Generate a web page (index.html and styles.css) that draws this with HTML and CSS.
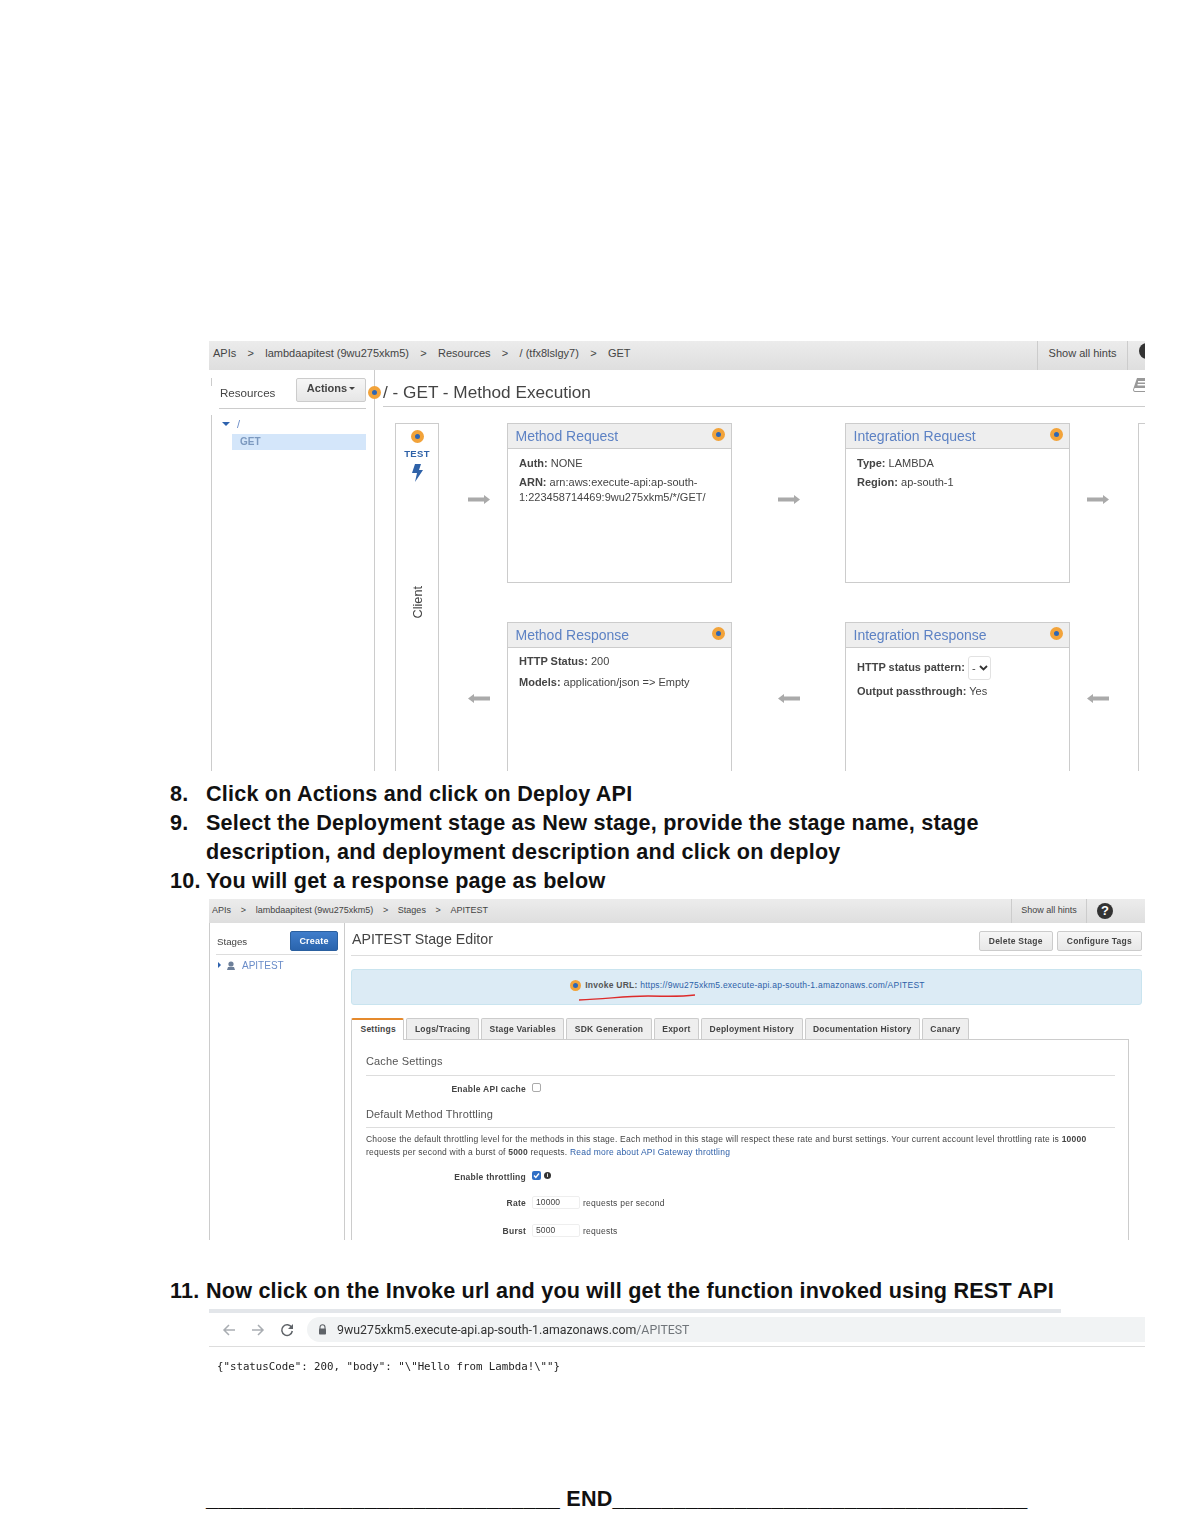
FILE: index.html
```html
<!DOCTYPE html>
<html lang="en">
<head>
<meta charset="UTF-8">
<meta name="viewport" content="width=device-width, initial-scale=1">
<title>Deploy API steps</title>
<link rel="stylesheet" href="styles.css">
</head>
<body>
<div class="page">

  <!-- Screenshot: method execution -->
  <section class="shot shot-method">
    <div class="bar">
      <div class="crumbs">
        <span>APIs</span><i>&gt;</i><span>lambdaapitest (9wu275xkm5)</span><i>&gt;</i><span>Resources</span><i>&gt;</i><span>/ (tfx8lslgy7)</span><i>&gt;</i><span>GET</span>
      </div>
      <div class="hints-link">Show all hints</div>
      <div class="help"><span class="help-icon"></span></div>
    </div>
    <div class="method-body">
      <aside class="res-side">
        <div class="res-head">
          <span>Resources</span>
          <button class="btn-actions">Actions<b class="btn-caret"></b></button>
        </div>
        <div class="res-tree">
          <div class="tree-root"><b class="caret-down"></b><span>/</span></div>
          <div class="tree-get">GET</div>
        </div>
      </aside>
      <main class="method-main">
        <span class="hint hint-edge"></span>
        <div class="method-title">
          <h2>/ - GET - Method Execution</h2>
          <svg class="book" width="14" height="16" viewBox="0 0 14 16"><path d="M4 1h10v10H2.500C1.600 11 1 11.500 1 12.500S1.600 14 2.500 14H14v1H2C.8 15 0 14 0 12.800z" fill="#999"/><path d="M5 4h9v1.500H5zM4.500 7H14v1.500H4.500z" fill="#fff"/></svg>
        </div>
        <div class="flow">
          <div class="client">
            <span class="hint"></span>
            <span class="test">TEST</span>
            <svg class="bolt" width="11" height="18" viewBox="0 0 11 18"><path d="M3 0h6L7 6h4L3 18l2-9H0z" fill="#2f62a8"/></svg>
            <span class="client-label">Client</span>
          </div>

          <svg class="arrow arrow-a r1" width="22" height="9" viewBox="0 0 22 9"><path d="M0 2.500h16V0l6 4.500L16 9V6.500H0z" fill="#aaa"/></svg>
          <div class="card c1 r1">
            <div class="card-head"><h3>Method Request</h3><span class="hint"></span></div>
            <div class="card-text">
              <p><b>Auth:</b> NONE</p>
              <p><b>ARN:</b> arn:aws:execute-api:ap-south-<br>1:223458714469:9wu275xkm5/*/GET/</p>
            </div>
          </div>
          <svg class="arrow arrow-b r1" width="22" height="9" viewBox="0 0 22 9"><path d="M0 2.500h16V0l6 4.500L16 9V6.500H0z" fill="#aaa"/></svg>
          <div class="card c2 r1">
            <div class="card-head"><h3>Integration Request</h3><span class="hint"></span></div>
            <div class="card-text">
              <p><b>Type:</b> LAMBDA</p>
              <p><b>Region:</b> ap-south-1</p>
            </div>
          </div>
          <svg class="arrow arrow-c r1" width="22" height="9" viewBox="0 0 22 9"><path d="M0 2.500h16V0l6 4.500L16 9V6.500H0z" fill="#aaa"/></svg>

          <svg class="arrow arrow-a r2" width="22" height="9" viewBox="0 0 22 9"><path d="M22 2.500H6V0L0 4.500 6 9V6.500h16z" fill="#aaa"/></svg>
          <div class="card card-open c1 r2">
            <div class="card-head"><h3>Method Response</h3><span class="hint"></span></div>
            <div class="card-text">
              <p><b>HTTP Status:</b> 200</p>
              <p><b>Models:</b> application/json =&gt; Empty</p>
            </div>
          </div>
          <svg class="arrow arrow-b r2" width="22" height="9" viewBox="0 0 22 9"><path d="M22 2.500H6V0L0 4.500 6 9V6.500h16z" fill="#aaa"/></svg>
          <div class="card card-open c2 r2">
            <div class="card-head"><h3>Integration Response</h3><span class="hint"></span></div>
            <div class="card-text card-select">
              <p><b>HTTP status pattern:</b> <span class="mini-select">- <svg width="9" height="6" viewBox="0 0 9 6"><path d="M1 1l3.500 3.500L8 1" fill="none" stroke="#333" stroke-width="1.800"/></svg></span></p>
              <p><b>Output passthrough:</b> Yes</p>
            </div>
          </div>
          <svg class="arrow arrow-c r2" width="22" height="9" viewBox="0 0 22 9"><path d="M22 2.500H6V0L0 4.500 6 9V6.500h16z" fill="#aaa"/></svg>

          <div class="backend"></div>
        </div>
      </main>
    </div>
  </section>

  <ol class="steps">
    <li><span class="num">8.</span><span>Click on Actions and click on Deploy API</span></li>
    <li><span class="num">9.</span><span>Select the Deployment stage as New stage, provide the stage name, stage description, and deployment description and click on deploy</span></li>
    <li><span class="num">10.</span><span>You will get a response page as below</span></li>
  </ol>

  <!-- Screenshot: stage editor -->
  <section class="shot shot-stage">
    <div class="bar bar-small">
      <div class="crumbs">
        <span>APIs</span><i>&gt;</i><span>lambdaapitest (9wu275xkm5)</span><i>&gt;</i><span>Stages</span><i>&gt;</i><span>APITEST</span>
      </div>
      <div class="hints-link">Show all hints</div>
      <div class="help"><span class="help-icon">?</span></div>
    </div>
    <div class="stage-body">
      <aside class="stage-side">
        <div class="stage-side-head">
          <span>Stages</span>
          <button class="btn-create">Create</button>
        </div>
        <div class="stage-item">
          <b class="caret-right"></b>
          <svg width="10" height="9" viewBox="0 0 10 9"><circle cx="5" cy="3" r="2.600" fill="#6d7f99"/><path d="M1 9l1-3h6l1 3z" fill="#6d7f99"/></svg>
          <span>APITEST</span>
        </div>
      </aside>
      <main class="stage-main">
        <div class="stage-title">
          <h2>APITEST Stage Editor</h2>
          <div class="stage-buttons">
            <button class="btn-plain">Delete Stage</button>
            <button class="btn-plain">Configure Tags</button>
          </div>
        </div>
        <div class="invoke">
          <span class="hint"></span>
          <span class="invoke-text"><b>Invoke URL:</b> <a>https://9wu275xkm5.execute-api.ap-south-1.amazonaws.com/APITEST</a></span>
          <svg class="scribble" width="119" height="7" viewBox="0 0 119 7"><path d="M1 6C30 5 45 2 70 2c18 0 30 1 47-1" fill="none" stroke="#dd2b2b" stroke-width="1.500"/></svg>
        </div>
        <nav class="tabs">
          <span class="tab tab-on">Settings</span>
          <span class="tab">Logs/Tracing</span>
          <span class="tab">Stage Variables</span>
          <span class="tab">SDK Generation</span>
          <span class="tab">Export</span>
          <span class="tab">Deployment History</span>
          <span class="tab">Documentation History</span>
          <span class="tab">Canary</span>
        </nav>
        <div class="panel">
          <h4>Cache Settings</h4>
          <div class="form-row row-cache">
            <label>Enable API cache</label>
            <span class="check"></span>
          </div>
          <h4 class="h-throttle">Default Method Throttling</h4>
          <p class="panel-note">Choose the default throttling level for the methods in this stage. Each method in this stage will respect these rate and burst settings. Your current account level throttling rate is <b>10000</b> requests per second with a burst of <b>5000</b> requests. <a>Read more about API Gateway throttling</a></p>
          <div class="form-row row-throttle">
            <label>Enable throttling</label>
            <span class="check check-on"><svg width="9" height="9" viewBox="0 0 9 9"><path d="M2 4.500l1.800 2L7 2.500" fill="none" stroke="#fff" stroke-width="1.400"/></svg></span>
            <span class="info">i</span>
          </div>
          <div class="form-row row-rate">
            <label>Rate</label>
            <span class="num-input">10000</span>
            <span class="unit">requests per second</span>
          </div>
          <div class="form-row row-burst">
            <label>Burst</label>
            <span class="num-input">5000</span>
            <span class="unit">requests</span>
          </div>
        </div>
      </main>
    </div>
  </section>

  <ol class="steps steps-last">
    <li><span class="num">11.</span><span>Now click on the Invoke url and you will get the function invoked using REST API</span></li>
  </ol>

  <!-- Screenshot: browser result -->
  <section class="shot-browser">
    <div class="browser-rule"></div>
    <div class="browser-bar">
      <svg width="14" height="14" viewBox="0 0 14 14"><path d="M13 7H2M7 2L2 7l5 5" fill="none" stroke="#a9adb2" stroke-width="1.500"/></svg>
      <svg width="14" height="14" viewBox="0 0 14 14"><path d="M1 7h11M7 2l5 5-5 5" fill="none" stroke="#a9adb2" stroke-width="1.500"/></svg>
      <svg width="14" height="14" viewBox="0 0 14 14"><path d="M11.700 4.500A5.300 5.300 0 1 0 12.300 8" fill="none" stroke="#5f6368" stroke-width="1.500"/><path d="M13 1v5H8z" fill="#5f6368"/></svg>
      <div class="url">
        <svg width="9" height="11" viewBox="0 0 9 11"><path d="M2 5V3.200a2.500 2.500 0 0 1 5 0V5" fill="none" stroke="#5f6368" stroke-width="1.100"/><rect x="1" y="4.500" width="7" height="6" rx=".8" fill="#5f6368"/></svg>
        <span>9wu275xkm5.execute-api.ap-south-1.amazonaws.com<em>/APITEST</em></span>
      </div>
    </div>
    <pre class="json">{"statusCode": 200, "body": "\"Hello from Lambda!\""}</pre>
  </section>

  <p class="end-line">_____________________________ END__________________________________</p>
</div>
</body>
</html>
```

FILE: styles.css
```css
* {
  box-sizing: border-box;
}
body {
  margin: 0;
  background: #fff;
  font-family: 'Liberation Sans', Arial, sans-serif;
  color: #444;
}
.page {
  width: 1202px;
  height: 1522px;
  padding-top: 341px;
  overflow: hidden;
}
h2, h3, h4, p, ol, pre {
  margin: 0;
  padding: 0;
  font-weight: normal;
}
button {
  font-family: inherit;
  padding: 0;
}

/* screenshots */
.shot {
  margin-left: 209px;
  width: 936px;
  overflow: hidden;
  filter: blur(0.3px);
}
.shot-method {
  height: 430px;
}
.shot-stage {
  height: 341px;
  margin-top: 4px;
}

/* top grey bar */
.bar {
  display: flex;
  align-items: stretch;
  height: 29px;
  background: linear-gradient(#ececec, #dedede);
  font-size: 11px;
  line-height: 24px;
}
.crumbs {
  flex: 1;
  padding-left: 4px;
  white-space: nowrap;
}
.crumbs i {
  font-style: normal;
  margin: 0 11.300px;
}
.hints-link {
  width: 91px;
  border-left: 1px solid #ccc;
  border-right: 1px solid #ccc;
  text-align: center;
}
.help {
  flex: none;
  width: 17px;
  padding: 2px 0 0 11px;
  overflow: hidden;
}
.help-icon {
  display: block;
  width: 16px;
  height: 16px;
  border-radius: 50%;
  background: #333;
  color: #fff;
  font-size: 13px;
  font-weight: bold;
  line-height: 16px;
  text-align: center;
}
.bar-small {
  height: 24px;
  font-size: 9px;
  line-height: 23px;
}
.bar-small .crumbs {
  padding-left: 3px;
}
.bar-small .crumbs i {
  margin: 0 9.700px;
}
.bar-small .hints-link {
  width: 76px;
}
.bar-small .help {
  width: 58px;
  padding: 4px 0 0 10px;
}

/* method execution */
.method-body {
  display: grid;
  grid-template-columns: 166px 1fr;
  height: 401px;
}
.res-side {
  position: relative;
  border-right: 1px solid #ccc;
  padding-left: 2px;
}
.res-side::before {
  content: '';
  position: absolute;
  left: 2px;
  top: 8px;
  height: 8px;
  border-left: 1px solid #ccc;
}
.res-head {
  display: flex;
  justify-content: space-between;
  align-items: center;
  margin: 8px 8px 0 8px;
  padding: 0 0 6px 1px;
  border-bottom: 1px solid #ccc;
  font-size: 11.600px;
}
.res-head span {
  padding-top: 4px;
}
.btn-actions {
  width: 70px;
  height: 24px;
  border: 1px solid #ccc;
  border-radius: 2px;
  background: linear-gradient(#f6f6f6, #e6e6e6);
  font-size: 11px;
  font-weight: bold;
  color: #444;
  line-height: 19px;
  padding-bottom: 3px;
}
.btn-caret {
  display: inline-block;
  margin-left: 2px;
  vertical-align: 2px;
  border-left: 3.500px solid transparent;
  border-right: 3.500px solid transparent;
  border-top: 3px solid #444;
}
.res-tree {
  height: 356px;
  margin-top: 6px;
  padding: 1px 8px 0 10px;
  border-left: 1px solid #ccc;
}
.tree-root {
  display: flex;
  align-items: center;
  gap: 7px;
  height: 16px;
  margin-bottom: 2px;
  font-size: 11px;
  color: #6a8cc8;
}
.caret-down {
  border-left: 4px solid transparent;
  border-right: 4px solid transparent;
  border-top: 4px solid #2d62ae;
}
.tree-get {
  height: 16px;
  margin-left: 10px;
  padding-left: 8px;
  background: #d4e6fa;
  color: #7c99bf;
  font-size: 10px;
  font-weight: bold;
  line-height: 16px;
}
.method-main {
  position: relative;
}
.method-title {
  position: relative;
  margin-left: 8px;
  padding-top: 8px;
  height: 37px;
  border-bottom: 1px solid #ccc;
}
.method-title h2 {
  font-size: 17.200px;
  line-height: 28px;
  color: #444;
}
.book {
  position: absolute;
  right: -2px;
  top: 7px;
}

/* orange hint dot */
.hint {
  display: block;
  flex: none;
  width: 13px;
  height: 13px;
  border: 4px solid #f2a33a;
  border-radius: 50%;
  background: #2e67b5;
}
.hint-edge {
  position: absolute;
  left: -7px;
  top: 16px;
}

/* flow diagram */
.flow {
  display: grid;
  grid-template-columns: 44px 68px 225px 113px 225px 68px 7px;
  grid-template-rows: 160px 39px 149px;
  margin: 16px 0 0 20px;
}
.client {
  grid-column: 1;
  grid-row: 1 / 4;
  display: flex;
  flex-direction: column;
  align-items: center;
  position: relative;
  padding-top: 6px;
  border: 1px solid #ccc;
  border-bottom: 0;
}
.test {
  margin-top: 5px;
  color: #2f62a8;
  font-size: 9.500px;
  font-weight: bold;
  letter-spacing: 0.3px;
}
.bolt {
  margin-top: 5px;
}
.client-label {
  position: absolute;
  top: 162px;
  left: 15px;
  font-size: 12.700px;
  line-height: 15px;
  writing-mode: vertical-rl;
  transform: rotate(180deg);
}
.backend {
  grid-column: 7;
  grid-row: 1 / 4;
  border-left: 1px solid #ccc;
  border-top: 1px solid #ccc;
}
.card {
  border: 1px solid #ccc;
}
.card-open {
  border-bottom: 0;
}
.c1 {
  grid-column: 3;
}
.c2 {
  grid-column: 5;
}
.r1 {
  grid-row: 1;
}
.r2 {
  grid-row: 3;
}
.card-head {
  display: flex;
  justify-content: space-between;
  height: 25px;
  padding: 4px 6px 0 7.500px;
  background: #eee;
  border-bottom: 1px solid #ccc;
}
.card-head h3 {
  font-size: 14px;
  line-height: 17px;
  color: #5d82c4;
}
.card-text {
  padding: 7px 11px;
  font-size: 11px;
  line-height: 15px;
}
.card-text p {
  margin-bottom: 4px;
}
.card-open .card-text {
  padding-top: 6px;
}
.card-open .card-text p {
  margin-bottom: 6px;
}
.card-open .card-select {
  padding-top: 8px;
}
.card-open .card-select p {
  margin-bottom: 4px;
}
.mini-select {
  display: inline-flex;
  align-items: center;
  gap: 3px;
  height: 24px;
  width: 23px;
  padding-left: 3px;
  border: 1px solid #e2e2e2;
  border-radius: 3px;
  vertical-align: middle;
}
.arrow {
  align-self: start;
  margin-top: 72px;
}
.arrow-a {
  grid-column: 2;
  margin-left: 29px;
}
.arrow-b {
  grid-column: 4;
  margin-left: 46px;
}
.arrow-c {
  grid-column: 6;
  margin-left: 17px;
}

/* numbered text */
.steps {
  list-style: none;
  margin: 8px 0 0 170px;
  width: 830px;
  font-size: 21.600px;
  font-weight: bold;
  letter-spacing: 0.2px;
  line-height: 29px;
  color: #111;
}
.steps li {
  display: flex;
}
.num {
  flex: none;
  width: 36px;
}
.steps-last {
  margin-top: 36px;
  width: 900px;
}

/* stage editor */
.stage-body {
  display: grid;
  grid-template-columns: 136px 1fr;
  height: 317px;
}
.stage-side {
  border-left: 1px solid #ccc;
  border-right: 1px solid #ccc;
  padding: 8px 6px 0 6px;
}
.stage-side-head {
  display: flex;
  justify-content: space-between;
  height: 24px;
  border-bottom: 1px solid #ddd;
  font-size: 9.700px;
}
.stage-side-head span {
  padding: 5px 0 0 1px;
}
.btn-create {
  width: 48px;
  height: 20px;
  border: 1px solid #2a5f9f;
  border-radius: 2px;
  background: linear-gradient(#3f7dcb, #2a64ad);
  color: #fff;
  font-size: 9px;
  font-weight: bold;
  letter-spacing: 0.2px;
}
.stage-item {
  display: flex;
  align-items: center;
  gap: 5px;
  height: 12px;
  margin-top: 4px;
  padding-left: 2px;
  font-size: 10px;
  color: #6a8cc8;
}
.stage-item svg {
  margin-right: 1px;
}
.caret-right {
  border-top: 3px solid transparent;
  border-bottom: 3px solid transparent;
  border-left: 3px solid #2d62ae;
}
.stage-main {
  padding: 0 3px 0 6px;
}
.stage-title {
  display: flex;
  justify-content: space-between;
  height: 33px;
  padding-top: 8px;
  border-bottom: 1px solid #ddd;
}
.stage-title h2 {
  font-size: 14.200px;
  line-height: 16px;
  padding-left: 1px;
}
.stage-buttons {
  display: flex;
  gap: 4px;
}
.btn-plain {
  height: 20px;
  padding: 0 9px;
  border: 1px solid #ccc;
  border-radius: 2px;
  background: linear-gradient(#f6f6f6, #e8e8e8);
  color: #444;
  font-size: 8.500px;
  font-weight: bold;
  letter-spacing: 0.25px;
}
.invoke {
  position: relative;
  display: flex;
  justify-content: center;
  align-items: center;
  gap: 4px;
  height: 36px;
  margin-top: 13px;
  padding: 0 0 4px 2px;
  background: #dcebf5;
  border: 1px solid #c9e4ef;
  border-radius: 3px;
}
.invoke .hint {
  width: 11px;
  height: 11px;
  border-width: 3px;
}
.invoke-text {
  font-size: 8.500px;
  letter-spacing: 0.25px;
  color: #2d5fa8;
}
.invoke-text b {
  color: #555;
}
.scribble {
  position: absolute;
  left: 226px;
  top: 24px;
}
.tabs {
  display: flex;
  gap: 2px;
  height: 21px;
  margin-top: 13px;
}
.tab {
  padding: 0 7.500px;
  height: 21px;
  background: #eee;
  border: 1px solid #ccc;
  border-bottom: 0;
  border-radius: 2px 2px 0 0;
  font-size: 8.500px;
  font-weight: bold;
  letter-spacing: 0.23px;
  line-height: 20px;
}
.tab-on {
  height: 22px;
  padding-left: 8.500px;
  position: relative;
  background: #fff;
  border-top: 2px solid #e58a2d;
  line-height: 19px;
}
.panel {
  width: 778px;
  height: 210px;
  padding: 14px 13px 0 14px;
  border: 1px solid #ccc;
  border-bottom: 0;
}
.panel h4 {
  padding-bottom: 7px;
  border-bottom: 1px solid #ddd;
  font-size: 11px;
  line-height: 14px;
  letter-spacing: 0.15px;
  color: #555;
}
.panel .h-throttle {
  margin-top: 14px;
  padding-bottom: 6px;
}
.panel-note {
  margin-top: 5px;
  font-size: 8.500px;
  letter-spacing: 0.21px;
  line-height: 13px;
}
.panel-note a {
  color: #2d5fa8;
}
.form-row {
  display: grid;
  grid-template-columns: 160px auto auto 1fr;
  column-gap: 6px;
  align-items: center;
  font-size: 8.500px;
  letter-spacing: 0.25px;
}
.form-row label {
  text-align: right;
  font-weight: bold;
}
.row-cache {
  margin-top: 5px;
  height: 12px;
}
.row-cache label, .row-throttle label {
  padding-top: 3px;
}
.row-throttle {
  margin-top: 10px;
  height: 12px;
  grid-template-columns: 160px 9px auto 1fr;
}
.row-rate {
  margin-top: 15px;
  height: 13px;
}
.row-burst {
  margin-top: 15px;
  height: 13px;
}
.check {
  display: block;
  width: 9px;
  height: 9px;
  border: 1px solid #aaa;
  border-radius: 2px;
  background: #fff;
}
.check-on {
  background: #2f6fc6;
  border: 0;
}
.check svg {
  display: block;
}
.info {
  width: 7px;
  height: 7px;
  margin-left: -3px;
  border-radius: 50%;
  background: #333;
  color: #fff;
  font-size: 6px;
  font-weight: bold;
  letter-spacing: 0;
  line-height: 7px;
  text-align: center;
}
.num-input {
  width: 48px;
  height: 13px;
  padding-left: 3px;
  border: 1px solid #eee;
  border-radius: 2px;
  letter-spacing: 0.1px;
  line-height: 11px;
}
.unit {
  margin-left: -3px;
}

/* browser result */
.shot-browser {
  margin: 4px 0 0 209px;
  width: 936px;
  filter: blur(0.3px);
}
.browser-rule {
  width: 852px;
  height: 4px;
  background: #e3e6ea;
}
.browser-bar {
  display: flex;
  align-items: center;
  gap: 15px;
  height: 34px;
  padding-left: 13px;
  border-bottom: 1px solid #ddd;
}
.url {
  flex: 1;
  display: flex;
  align-items: center;
  gap: 10px;
  height: 25px;
  margin-left: -2px;
  padding-left: 11px;
  background: #f1f3f4;
  border-radius: 13px 0 0 13px;
  font-family: Roboto, 'Liberation Sans', sans-serif;
  font-size: 12.350px;
  color: #333;
}
.url em {
  font-style: normal;
  color: #70757a;
}
.json {
  margin: 13px 0 0 8px;
  font-family: 'DejaVu Sans Mono', monospace;
  font-size: 10.750px;
  line-height: 13px;
  color: #222;
}
.end-line {
  margin: 111px 0 0 206px;
  font-size: 21.600px;
  font-weight: bold;
  letter-spacing: 0.2px;
  line-height: 29px;
  color: #111;
  white-space: nowrap;
}
```
